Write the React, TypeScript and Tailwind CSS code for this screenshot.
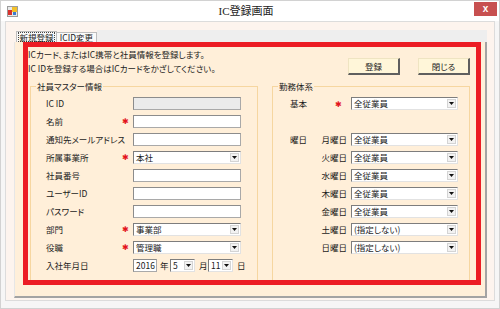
import React from 'react';

const JP = "font-['Noto_Sans_CJK_JP','Noto_Sans',sans-serif] [font-feature-settings:'palt']";

function Star() {
  return <span className="text-[8px] leading-none text-[#e3141c]">✱</span>;
}

function TextBox({ value = '', disabled = false, className = 'w-[108px]' }: { value?: string; disabled?: boolean; className?: string }) {
  return (
    <div
      className={`h-[13px] border border-[#a9a9a9] border-t-[#8c8c8c] border-l-[#8c8c8c] pl-[2px] text-[8.5px] leading-[11px] ${disabled ? 'bg-[#ebebeb]' : 'bg-white'} ${className}`}
    >
      {value}
    </div>
  );
}

function Combo({ value, className = 'w-[108px]' }: { value: string; className?: string }) {
  return (
    <div className={`flex h-[13px] items-stretch border border-[#e2e2e2] border-t-[#7d7d7d] border-l-[#7d7d7d] bg-white ${className}`}>
      <span className="flex-1 overflow-hidden whitespace-nowrap pl-[2px] text-[8.5px] leading-[11px]">{value}</span>
      <span className="m-[1px] flex w-[9px] items-center justify-center border border-[#d4d4d4] bg-[#f2f2f2]">
        <svg width="5" height="3" viewBox="0 0 5 3">
          <path d="M0 0h5L2.5 3z" fill="#111" />
        </svg>
      </span>
    </div>
  );
}

function LeftRow({ label, star = false, children }: { label: string; star?: boolean; children: React.ReactNode }) {
  return (
    <div className="flex h-[18px] items-center">
      <span className="w-[73px] whitespace-nowrap">{label}</span>
      <span className="flex w-[12px] justify-center">{star && <Star />}</span>
      <span className="ml-[2px] flex items-center">{children}</span>
    </div>
  );
}

function DayRow({ head = '', day = '', star = false, value }: { head?: string; day?: string; star?: boolean; value?: string }) {
  return (
    <div className="flex h-[18px] items-center">
      <span className="w-[30px]">{head}</span>
      <span className="flex w-[28px] justify-end pr-[1px]">
        {star ? <span className="pr-[5px]"><Star /></span> : day}
      </span>
      <span className="ml-[3px]">{value && <Combo value={value} className="w-[107px]" />}</span>
    </div>
  );
}

function Button({ label }: { label: string }) {
  return (
    <div className="flex h-[17px] w-[52px] items-center justify-center border border-[#efe4c2] border-r-2 border-b-2 border-r-[#5f5f5f] border-b-[#5f5f5f] bg-[#fff6d9] text-[8.5px]">
      {label}
    </div>
  );
}

const App: React.FC = () => {
  return (
    <div className={`flex h-[309px] w-[500px] flex-col border border-[#d2d2d2] bg-[#f6f6f6] text-[#1b1b1b] ${JP}`}>
      {/* title bar */}
      <div className="relative flex h-[20px] items-center bg-white">
        <svg className="ml-[6px]" width="11" height="11" viewBox="0 0 11 11">
          <rect x="0.5" y="0.5" width="10" height="10" fill="#e9e9e9" stroke="#9c9c9c" />
          <rect x="1" y="4" width="4" height="5" fill="#d8312c" />
          <rect x="5" y="1" width="5" height="5" fill="#f3c12a" />
          <rect x="6" y="6" width="3" height="3" fill="#3d7bd0" />
        </svg>
        <span className="flex-1 text-center text-[11px] text-[#222] font-['Liberation_Serif','Noto_Sans_CJK_JP',serif]">IC登録画面</span>
        <div className="mr-[2px] flex h-[14px] w-[23px] items-center justify-center self-start mt-[1px] bg-[#c75050] text-[10px] font-bold leading-none text-white font-['Liberation_Sans',sans-serif]">
          x
        </div>
      </div>

      {/* client */}
      <div className="flex flex-1 px-[4px] pb-[7px]">
        <div className="flex flex-1 flex-col border border-[#dcdcdc] bg-[#fdf4ee] pl-[8px] pr-[7px] pt-[8px] pb-[2px]">
          {/* tab strip */}
          <div className="flex h-[12px] items-end">
            <div className="w-[2px]" />
            <div className="flex h-[11px] w-[41px] items-center justify-center whitespace-nowrap border border-b-0 border-[#bdbdbd] bg-[#f9f9f9] text-[8.5px]">
              <span className="border border-dotted border-[#444] leading-[8px]">新規登録</span>
            </div>
            <div className="flex h-[10px] w-[40px] items-center justify-center whitespace-nowrap border border-b-0 border-l-0 border-[#bdbdbd] bg-[#fafafa] text-[8.5px] leading-[9px]">
              ICID変更
            </div>
            <div className="h-full flex-1 bg-[#eeeeee]" />
          </div>

          {/* tab page */}
          <div className="flex flex-1 border-l border-[#e6e6e6] border-r-2 border-b-2 border-r-[#a3a3a3] border-b-[#a3a3a3] bg-[#ffefd9] pl-[8px] pr-[3px] pb-[10px]">
            <div className="flex h-[243px] w-[458px] flex-col border-[5px] border-[#ec1c24] text-[8.5px]">
              {/* header */}
              <div className="flex justify-between pr-[6px]">
                <div className="leading-[14px]">
                  <div>ICカード、またはIC携帯と社員情報を登録します。</div>
                  <div>IC IDを登録する場合はICカードをかざしてください。</div>
                </div>
                <div className="flex gap-[18px] pt-[11px]">
                  <Button label="登録" />
                  <Button label="閉じる" />
                </div>
              </div>

              {/* groups */}
              <div className="mt-[6px] flex flex-1 pl-[2px]">
                <fieldset className="w-[228px] border border-b-0 border-[#f6d6a0] pl-[15px] pt-[2px]">
                  <legend className="-ml-[10px] px-[1px] text-[8.5px] leading-[11px]">社員マスター情報</legend>
                  <LeftRow label="IC ID"><TextBox disabled /></LeftRow>
                  <LeftRow label="名前" star><TextBox /></LeftRow>
                  <LeftRow label="通知先メールアドレス"><TextBox /></LeftRow>
                  <LeftRow label="所属事業所" star><Combo value="本社" /></LeftRow>
                  <LeftRow label="社員番号"><TextBox /></LeftRow>
                  <LeftRow label="ユーザーID"><TextBox /></LeftRow>
                  <LeftRow label="パスワード"><TextBox /></LeftRow>
                  <LeftRow label="部門" star><Combo value="事業部" /></LeftRow>
                  <LeftRow label="役職" star><Combo value="管理職" /></LeftRow>
                  <LeftRow label="入社年月日">
                    <TextBox value="2016" className="w-[24px]" />
                    <span className="ml-[3px] w-[10px]">年</span>
                    <Combo value="5" className="w-[25px]" />
                    <span className="ml-[4px] w-[9px]">月</span>
                    <Combo value="11" className="w-[25px]" />
                    <span className="ml-[4px]">日</span>
                  </LeftRow>
                </fieldset>

                <fieldset className="ml-[14px] w-[198px] border border-b-0 border-[#f6d6a0] pl-[17px] pt-[2px]">
                  <legend className="-ml-[12px] px-[1px] text-[8.5px] leading-[11px]">勤務体系</legend>
                  <DayRow head="基本" star value="全従業員" />
                  <DayRow />
                  <DayRow head="曜日" day="月曜日" value="全従業員" />
                  <DayRow day="火曜日" value="全従業員" />
                  <DayRow day="水曜日" value="全従業員" />
                  <DayRow day="木曜日" value="全従業員" />
                  <DayRow day="金曜日" value="全従業員" />
                  <DayRow day="土曜日" value="(指定しない)" />
                  <DayRow day="日曜日" value="(指定しない)" />
                </fieldset>
              </div>
            </div>
          </div>
        </div>
      </div>
    </div>
  );
};

export default App;
